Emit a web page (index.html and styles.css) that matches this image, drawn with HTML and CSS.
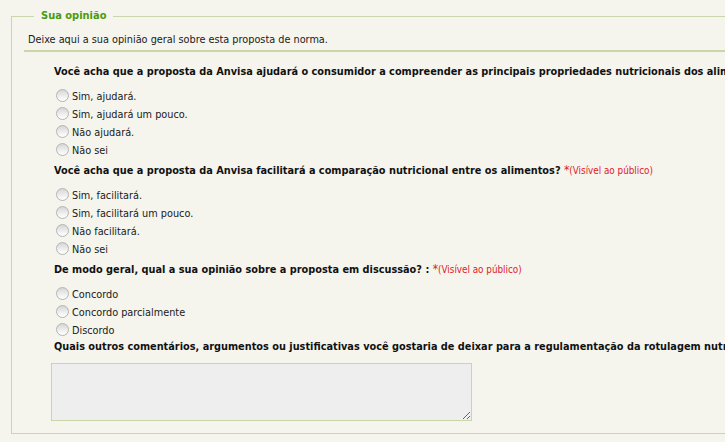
FILE: index.html
```html
<!DOCTYPE html>
<html lang="pt-BR">
<head>
<meta charset="utf-8">
<title>Sua opinião</title>
<link rel="stylesheet" href="styles.css">
</head>
<body>
<form class="form">
  <fieldset class="panel">
    <legend class="panel-title">Sua opinião</legend>
    <p class="intro">Deixe aqui a sua opinião geral sobre esta proposta de norma.</p>
    <div class="questions">
      <div class="question">
        <p class="q-label">Você acha que a proposta da Anvisa ajudará o consumidor a compreender as principais propriedades nutricionais dos alimentos?</p>
        <ul class="options">
          <li class="option"><input class="radio" type="radio" name="q1" id="q1a"><label for="q1a">Sim, ajudará.</label></li>
          <li class="option"><input class="radio" type="radio" name="q1" id="q1b"><label for="q1b">Sim, ajudará um pouco.</label></li>
          <li class="option"><input class="radio" type="radio" name="q1" id="q1c"><label for="q1c">Não ajudará.</label></li>
          <li class="option"><input class="radio" type="radio" name="q1" id="q1d"><label for="q1d">Não sei</label></li>
        </ul>
      </div>
      <div class="question">
        <p class="q-label">Você acha que a proposta da Anvisa facilitará a comparação nutricional entre os alimentos? <span class="req">*</span><span class="pub">(Visível ao público)</span></p>
        <ul class="options">
          <li class="option"><input class="radio" type="radio" name="q2" id="q2a"><label for="q2a">Sim, facilitará.</label></li>
          <li class="option"><input class="radio" type="radio" name="q2" id="q2b"><label for="q2b">Sim, facilitará um pouco.</label></li>
          <li class="option"><input class="radio" type="radio" name="q2" id="q2c"><label for="q2c">Não facilitará.</label></li>
          <li class="option"><input class="radio" type="radio" name="q2" id="q2d"><label for="q2d">Não sei</label></li>
        </ul>
      </div>
      <div class="question">
        <p class="q-label">De modo geral, qual a sua opinião sobre a proposta em discussão? : <span class="req">*</span><span class="pub">(Visível ao público)</span></p>
        <ul class="options">
          <li class="option"><input class="radio" type="radio" name="q3" id="q3a"><label for="q3a">Concordo</label></li>
          <li class="option"><input class="radio" type="radio" name="q3" id="q3b"><label for="q3b">Concordo parcialmente</label></li>
          <li class="option"><input class="radio" type="radio" name="q3" id="q3c"><label for="q3c">Discordo</label></li>
        </ul>
      </div>
      <div class="question">
        <p class="q-label q-label-tight">Quais outros comentários, argumentos ou justificativas você gostaria de deixar para a regulamentação da rotulagem nutricional?</p>
        <textarea class="comment"></textarea>
      </div>
    </div>
  </fieldset>
</form>
</body>
</html>
```
FILE: styles.css
```css
html, body {
  margin: 0;
  padding: 0;
  overflow: hidden;
  background: #f5f5ed;
}
body {
  font-family: Tahoma, "DejaVu Sans Condensed", "Liberation Sans", sans-serif;
  font-size: 10.8px;
  color: #1a1a1a;
}
.form {
  width: 900px;
  padding: 8px 0 0 11px;
}
.panel {
  margin: 0;
  padding: 0 0 12px 12px;
  border: 1px solid #c9d7ac;
  min-width: 0;
}
.panel-title {
  margin-left: 10px;
  padding: 0 7px;
  color: #4c9a0c;
  font-weight: bold;
  font-size: 11px;
  line-height: 16px;
}
.intro {
  margin: 8px 0 0 0;
  padding: 0 0 2px 4px;
  line-height: 16px;
  border-bottom: 2px solid #c8d7a5;
}
.questions {
  padding: 8px 0 0 30px;
}
.question {
  margin: 0;
}
.q-label {
  margin: 0;
  padding: 4px 0 6px;
  line-height: 16px;
  font-weight: bold;
  font-size: 10.85px;
  white-space: nowrap;
  color: #111;
}
.q-label-tight {
  padding-top: 1px;
}
.req {
  color: #e0202a;
  font-weight: normal;
  font-size: 12px;
}
.pub {
  color: #e0202a;
  font-weight: normal;
  font-size: 9.8px;
}
.options {
  list-style: none;
  margin: 0;
  padding: 0;
}
.option {
  display: flex;
  align-items: center;
  height: 18px;
}
.option label {
  padding-top: 3px;
  line-height: 14px;
}
.radio {
  appearance: none;
  -webkit-appearance: none;
  width: 13px;
  height: 13px;
  margin: 0 3px 0 2px;
  border: 1px solid #b4b4b4;
  border-radius: 50%;
  background: linear-gradient(#d6d6d6, #f4f4f4 70%, #ffffff);
  box-sizing: border-box;
}
.comment {
  display: block;
  margin: 2px 0 0 -3px;
  width: 421px;
  height: 58px;
  box-sizing: border-box;
  border: 1px solid #c8d6a8;
  background: #eeeeee;
  font-family: inherit;
  font-size: 11px;
}
```
